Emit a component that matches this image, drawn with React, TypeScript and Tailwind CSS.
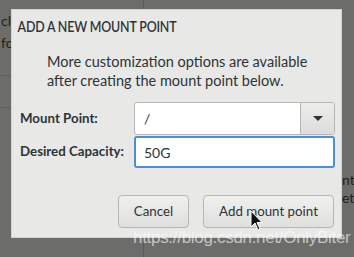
const App = () => {
  return (
    <div className="relative w-[354px] h-[257px] overflow-hidden bg-[#6c6d6a] font-['Lato',sans-serif] text-[#2e3436]">
      {/* dimmed window behind the dialog */}
      <div className="flex h-full">
        <div className="w-[143px] h-full flex flex-col text-[#1f2120] text-[14px]">
          <div className="h-[75px] pt-[10px] pl-[1px] leading-[22px]">
            <div>cl</div>
            <div>fo</div>
          </div>
          <div className="h-[32px] border-t border-[#5e5f5c]" />
          <div className="flex-1 border-t border-[#5e5f5c]" />
        </div>
        <div className="w-px h-full bg-[#5a5b58]" />
        <div className="flex-1 flex flex-col items-end pt-[171px] text-[14px] text-[#1f2120] leading-[18px]">
          <div className="w-[12px] overflow-hidden">nt</div>
          <div className="w-[12px] overflow-hidden">et</div>
        </div>
      </div>

      {/* dialog */}
      <div className="absolute left-[11px] top-[9px] w-[331px] h-[229px] bg-[#e8e8e7] border border-[#d3d3d1] flex flex-col">
        <h2 className="pl-[7px] pt-[6px] text-[15.5px] leading-[20px] font-semibold tracking-[-0.2px] text-[#2e3436] origin-left scale-x-[0.8] whitespace-nowrap">
          ADD A NEW MOUNT POINT
        </h2>
        <p className="pl-[35px] mt-[16px] text-[14.5px] leading-[19px] text-[#2e3436]">
          More customization options are available
          <br />
          after creating the mount point below.
        </p>
        <div className="flex items-center mt-[12px] pl-[8px]">
          <span className="w-[114px] text-[13.3px] font-bold text-[#2e3436]">Mount Point:</span>
          <div className="w-[201px] h-[33px] flex border border-[#b6b6b3] rounded-[3px] bg-white overflow-hidden">
            <div className="flex-1 flex items-center pl-[9px] text-[14px]">/</div>
            <div className="w-[34px] flex items-center justify-center border-l border-[#b6b6b3] bg-gradient-to-b from-[#ededeb] to-[#dcdcda]">
              <svg width="10" height="6" viewBox="0 0 10 6">
                <path d="M0 0 L10 0 L5 5 Z" fill="#2e3436" />
              </svg>
            </div>
          </div>
        </div>
        <div className="flex items-center mt-px pl-[8px]">
          <span className="w-[114px] text-[13.3px] font-bold text-[#2e3436] whitespace-nowrap">Desired Capacity:</span>
          <div className="w-[201px] h-[32px] flex items-center pl-[8px] border-2 border-[#4a90d9] rounded-[3px] bg-white text-[14px]">
            50G
          </div>
        </div>
        <div className="flex justify-end gap-[14px] mt-[27px] pr-[7px]">
          <button className="w-[71px] h-[33px] rounded-[4px] border border-[#b6b6b3] bg-gradient-to-b from-[#f0f0ee] to-[#dfdfdd] text-[13.3px] text-[#2e3436]">
            Cancel
          </button>
          <button className="w-[131px] h-[33px] rounded-[4px] border border-[#b6b6b3] bg-gradient-to-b from-[#f0f0ee] to-[#dfdfdd] text-[13.3px] text-[#2e3436]">
            Add mount point
          </button>
        </div>
      </div>

      {/* mouse cursor */}
      <svg className="absolute left-[250px] top-[210px]" width="13" height="21" viewBox="0 0 13 21">
        <path d="M1 1 L1 17 L5 13 L8 20 L10 19 L7 12.5 L12 12.5 Z" fill="#111" stroke="#fff" strokeWidth="1" />
      </svg>

      {/* watermark */}
      <div className="absolute left-[133px] top-[228px] text-[17px] leading-[20px] text-white/60 font-['Liberation_Sans',sans-serif] tracking-[-0.3px]">
        https://blog.csdn.net/OnlyBiter
      </div>
    </div>
  );
};

export default App;
